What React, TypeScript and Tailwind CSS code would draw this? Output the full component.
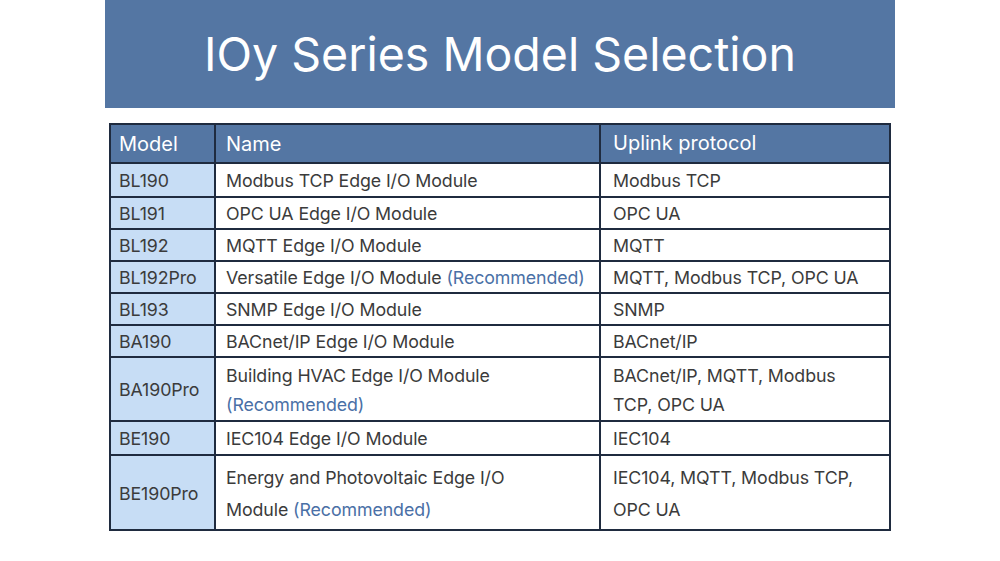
import React from 'react';

type Row = {
  model: string;
  name: React.ReactNode;
  proto: string;
  h: string;
  lh?: string;
};

const Rec = () => <span className="text-[#4a70a6]">(Recommended)</span>;

const rows: Row[] = [
  { model: 'BL190', name: 'Modbus TCP Edge I/O Module', proto: 'Modbus TCP', h: 'h-[34px]' },
  { model: 'BL191', name: 'OPC UA Edge I/O Module', proto: 'OPC UA', h: 'h-[32px]' },
  { model: 'BL192', name: 'MQTT Edge I/O Module', proto: 'MQTT', h: 'h-[32px]' },
  { model: 'BL192Pro', name: <>Versatile Edge I/O Module <Rec /></>, proto: 'MQTT, Modbus TCP, OPC UA', h: 'h-[32px]' },
  { model: 'BL193', name: 'SNMP Edge I/O Module', proto: 'SNMP', h: 'h-[32px]' },
  { model: 'BA190', name: 'BACnet/IP Edge I/O Module', proto: 'BACnet/IP', h: 'h-[32px]' },
  { model: 'BA190Pro', name: <>Building HVAC Edge I/O Module<br /><Rec /></>, proto: 'BACnet/IP, MQTT, Modbus TCP, OPC UA', h: 'h-[64px]', lh: 'leading-[29px]' },
  { model: 'BE190', name: 'IEC104 Edge I/O Module', proto: 'IEC104', h: 'h-[34px]' },
  { model: 'BE190Pro', name: <>Energy and Photovoltaic Edge I/O<br />Module <Rec /></>, proto: 'IEC104, MQTT, Modbus TCP, OPC UA', h: 'h-[75px]', lh: 'leading-[32px]' },
];

export default function App() {
  return (
    <div className="w-[1000px] h-[561px] bg-white font-['Inter',sans-serif] text-[#3b3b3b]">
      <div className="mx-auto w-[790px] h-[108px] bg-[#5476a3] flex items-center justify-center">
        <h1 className="text-white text-[46.5px] font-normal pt-[2px]">IOy Series Model Selection</h1>
      </div>

      <table className="mx-auto mt-[15px] w-[780px] border-collapse border-[2px] border-[#1f2b3f] table-fixed">
        <colgroup>
          <col className="w-[105px]" />
          <col className="w-[385px]" />
          <col className="w-[290px]" />
        </colgroup>
        <thead>
          <tr className="h-[39px] bg-[#5476a3] text-white text-[20px] text-left">
            <th className="font-normal border-[2px] border-[#1f2b3f] pl-[8px]">Model</th>
            <th className="font-normal border-[2px] border-[#1f2b3f] pl-[10px]">Name</th>
            <th className="font-normal border-[2px] border-[#1f2b3f] pl-[12px] pb-[2px]">Uplink protocol</th>
          </tr>
        </thead>
        <tbody className="text-[17.8px] tracking-[-0.1px]">
          {rows.map((r) => (
            <tr key={r.model} className={r.h}>
              <td className="bg-[#c7ddf5] border-[2px] border-[#1f2b3f] pl-[8px] pt-[2px] leading-[24px]">{r.model}</td>
              <td className={`border-[2px] border-[#1f2b3f] pl-[10px] pr-[4px] pt-[2px] ${r.lh ?? 'leading-[24px]'}`}>{r.name}</td>
              <td className={`border-[2px] border-[#1f2b3f] pl-[12px] pr-[20px] pt-[2px] ${r.lh ?? 'leading-[24px]'}`}>{r.proto}</td>
            </tr>
          ))}
        </tbody>
      </table>
    </div>
  );
}
